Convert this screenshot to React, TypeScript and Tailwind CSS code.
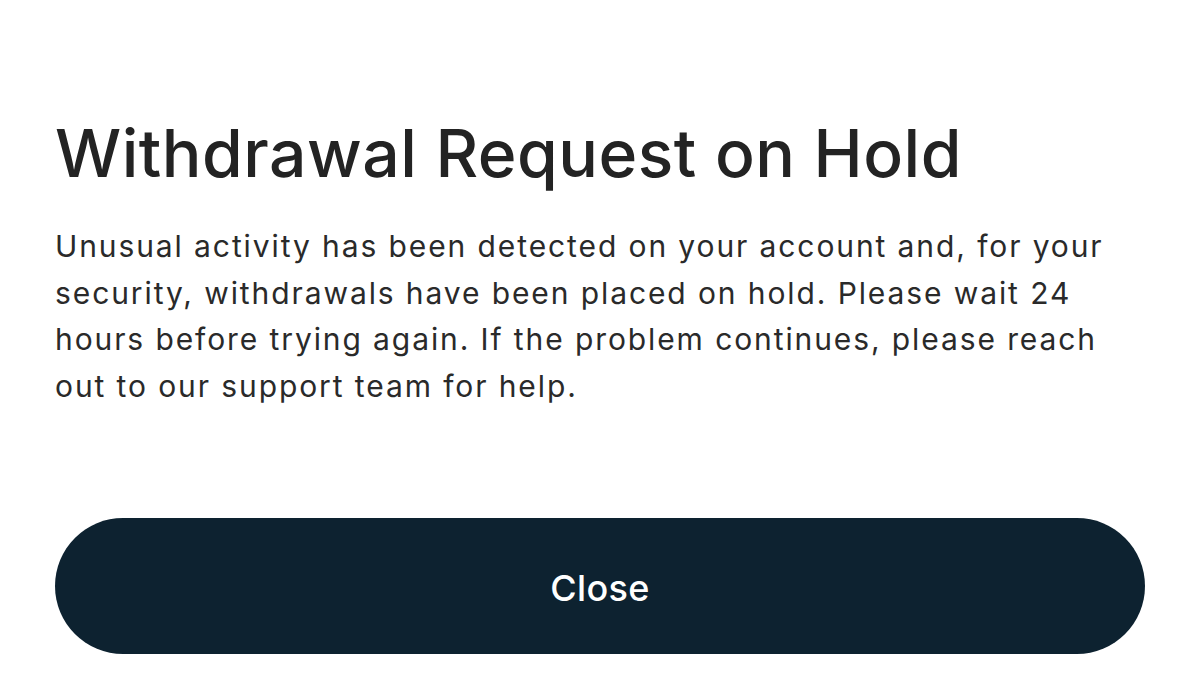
export default function App() {
  return (
    <div className="min-h-[675px] w-[1200px] bg-white px-[55px] font-['Inter',sans-serif]">
      <div className="pt-[112px]">
        <h1 className="text-[66px] font-medium leading-[82px] tracking-[0.5px] text-[#232323]">
          Withdrawal Request on Hold
        </h1>
        <p className="mt-[29px] text-[30px] leading-[46.5px] tracking-[1.9px] text-[#2a2a2a]">
          Unusual activity has been detected on your account and, for your
          <br />
          security, withdrawals have been placed on hold. Please wait 24
          <br />
          hours before trying again. If the problem continues, please reach
          <br />
          out to our support team for help.
        </p>
      </div>
      <button className="mt-[109px] flex h-[136px] w-full items-center justify-center rounded-full bg-[#0d2230] pt-[4px] text-[36px] font-medium tracking-[0.3px] text-white">
        Close
      </button>
    </div>
  );
}
